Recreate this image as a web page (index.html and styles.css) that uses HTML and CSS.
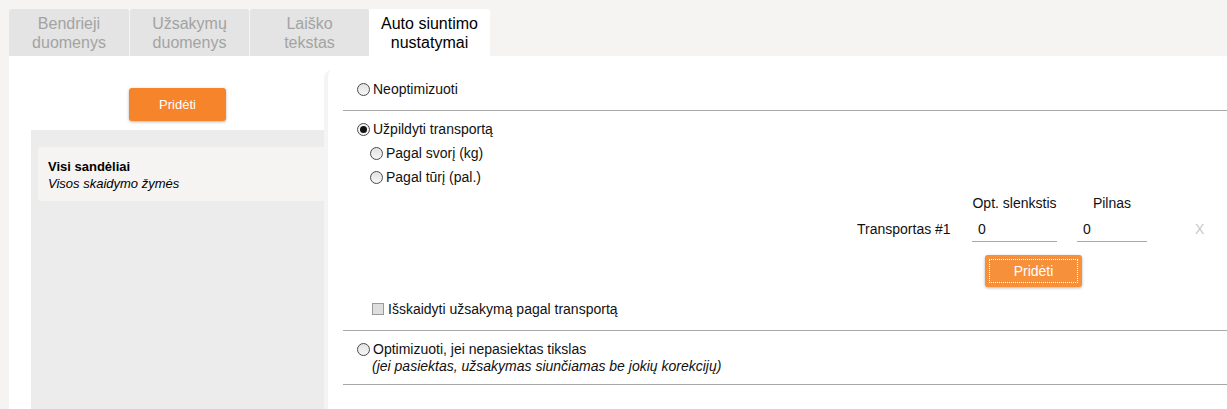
FILE: index.html
```html
<!DOCTYPE html>
<html lang="lt">
<head>
<meta charset="utf-8">
<title>Auto siuntimo nustatymai</title>
<link rel="stylesheet" href="styles.css">
</head>
<body>
<div class="page">
  <nav class="tabs">
    <div class="tab">Bendrieji<br>duomenys</div>
    <div class="tab">Užsakymų<br>duomenys</div>
    <div class="tab">Laiško<br>tekstas</div>
    <div class="tab active">Auto siuntimo<br>nustatymai</div>
  </nav>
  <div class="content">
    <aside class="left">
      <div class="left-top"><button class="btn">Pridėti</button></div>
      <div class="list">
        <div class="item">
          <div class="item-title">Visi sandėliai</div>
          <div class="item-sub">Visos skaidymo žymės</div>
        </div>
      </div>
    </aside>
    <main class="right">
      <section class="sec sec1">
        <div class="opt"><span class="radio"></span>Neoptimizuoti</div>
      </section>
      <section class="sec sec2">
        <div class="opt"><span class="radio checked"></span>Užpildyti transportą</div>
        <div class="opt sub"><span class="radio"></span>Pagal svorį (kg)</div>
        <div class="opt sub"><span class="radio"></span>Pagal tūrį (pal.)</div>
        <div class="grid">
          <div></div>
          <div class="th">Opt. slenkstis</div>
          <div class="th">Pilnas</div>
          <div></div>
          <div class="td-label">Transportas #1</div>
          <div class="field w85">0</div>
          <div class="field w70">0</div>
          <div class="remove">X</div>
        </div>
        <button class="btn btn-focus"><span class="btn-inner">Pridėti</span></button>
        <div class="opt check-row"><span class="checkbox"></span>Išskaidyti užsakymą pagal transportą</div>
      </section>
      <section class="sec sec3">
        <div class="opt tight"><span class="radio"></span>Optimizuoti, jei nepasiektas tikslas</div>
        <div class="note">(jei pasiektas, užsakymas siunčiamas be jokių korekcijų)</div>
      </section>
    </main>
  </div>
</div>
</body>
</html>
```

FILE: styles.css
```css
* { box-sizing: border-box; }
html, body { margin: 0; height: 100%; }
body {
  background: #f5f4f2;
  font-family: "Liberation Sans", Arial, sans-serif;
  color: #111;
  overflow: hidden;
}
.page {
  height: 100%;
  padding: 9px 0 0 9px;
  display: flex;
  flex-direction: column;
}
.tabs {
  display: flex;
  gap: 1px;
  height: 47px;
}
.tab {
  width: 119px;
  height: 47px;
  background: #e4e4e4;
  color: #a3a3a3;
  font-size: 16px;
  line-height: 19px;
  text-align: center;
  display: flex;
  align-items: center;
  justify-content: center;
  border-radius: 3px 3px 0 0;
}
.tab:first-child { width: 120px; }
.tab.active {
  width: 121px;
  margin-left: -1px;
  background: #fff;
  color: #000;
}
.content {
  flex: 1;
  background: #fff;
  display: flex;
  min-height: 0;
}
.left {
  width: 315px;
  padding-left: 22px;
  display: flex;
  flex-direction: column;
}
.left-top {
  height: 74px;
  padding-top: 32px;
  display: flex;
  justify-content: center;
}
.btn {
  width: 97px;
  height: 33px;
  border: none;
  border-radius: 3px;
  background: #f5842a;
  color: #fff;
  font-family: "Liberation Sans", Arial, sans-serif;
  font-size: 13px;
  box-shadow: 0 1px 3px rgba(0,0,0,0.3);
  padding: 0;
}
.list {
  flex: 1;
  background: #ececec;
  padding: 17px 0 0 7px;
}
.item {
  height: 54px;
  background: #f5f4f2;
  border-radius: 3px 0 0 3px;
  padding: 11px 0 0 10px;
  font-size: 13px;
  line-height: 17px;
  color: #000;
}
.item-title { font-weight: bold; }
.item-sub { font-style: italic; }
.right {
  flex: 1;
  margin-top: 14px;
  border-left: 4px solid #f4f4f4;
  border-top-left-radius: 8px;
}
.sec {
  margin-left: 15px;
  padding-left: 14px;
  border-bottom: 1px solid #a8a8a8;
  font-size: 14px;
}
.sec1 { padding-top: 9px; padding-bottom: 11px; }
.sec2 { padding-top: 6px; padding-bottom: 11px; }
.sec3 { padding-top: 10px; padding-bottom: 9px; }
.opt {
  display: flex;
  align-items: center;
  line-height: 20px;
  height: 20px;
}
.sec2 .opt { height: 24px; line-height: 24px; }
.sec2 .opt.sub { padding-left: 13px; }
.radio {
  width: 13px;
  height: 13px;
  border-radius: 50%;
  border: 1px solid #4a4a4a;
  background: linear-gradient(#e2e2e2, #f6f6f6);
  margin-right: 3px;
  display: flex;
  align-items: center;
  justify-content: center;
  flex: none;
}
.radio.checked { background: #f4f4f4; }
.radio.checked::after {
  content: "";
  width: 7px;
  height: 7px;
  border-radius: 50%;
  background: #111;
}
.grid {
  margin-top: 4px;
  margin-left: 500px;
  display: grid;
  grid-template-columns: 95px 85px 70px auto;
  grid-template-rows: 20px 32px;
  column-gap: 20px;
  align-items: center;
}
.th { text-align: center; line-height: 20px; color: #111; }
.td-label { color: #111; }
.field {
  height: 26px;
  line-height: 26px;
  border-bottom: 1px solid #a8a8a8;
  padding-left: 6px;
  font-size: 14px;
}
.remove {
  margin-left: 28px;
  color: #c8c8c8;
  font-size: 14px;
}
.btn-focus {
  display: block;
  margin: 10px 0 0 628px;
  width: 97px;
  height: 32px;
  background: #f6903a;
  padding: 4px;
  font-size: 14px;
}
.btn-inner {
  display: flex;
  align-items: center;
  justify-content: center;
  height: 100%;
  border: 1px dotted #fff;
}
.sec2 .check-row {
  margin-top: 12px;
  padding-left: 15px;
  height: 20px;
  line-height: 20px;
}
.checkbox {
  width: 12px;
  height: 12px;
  border: 1px solid #9a9a9a;
  background: #dedede;
  margin-right: 4px;
  flex: none;
}
.opt.tight { height: 17px; line-height: 17px; }
.note {
  font-style: italic;
  line-height: 17px;
  padding-left: 15px;
}
```
